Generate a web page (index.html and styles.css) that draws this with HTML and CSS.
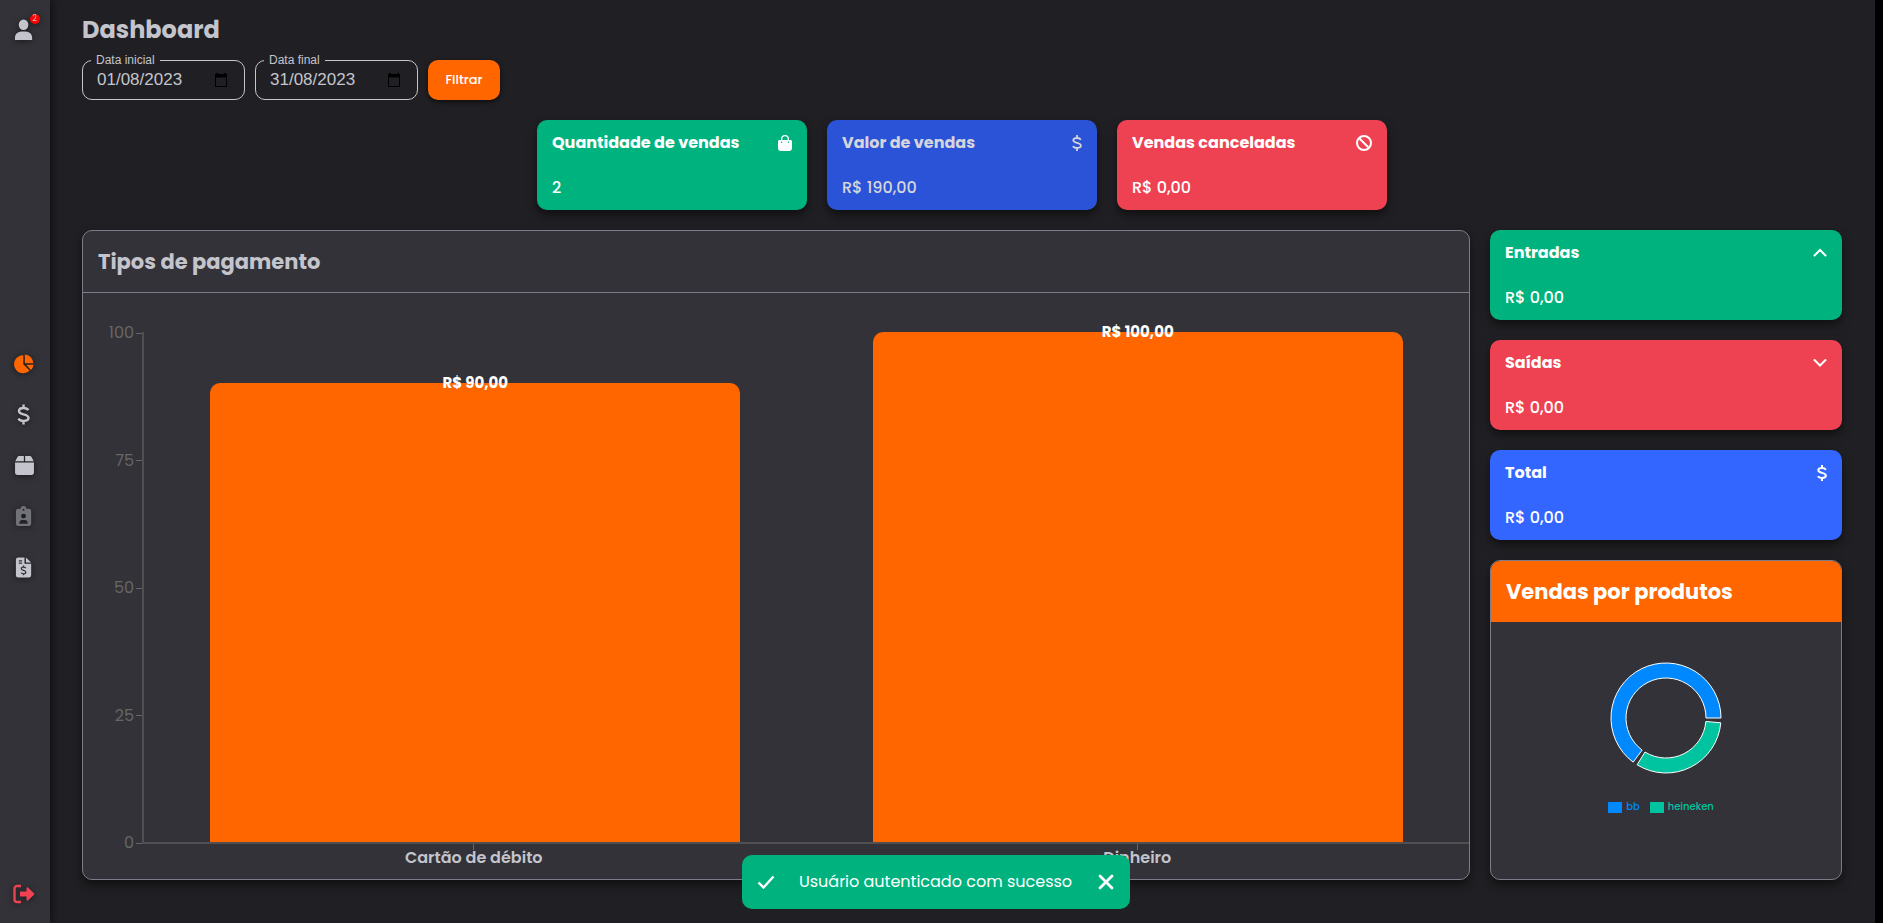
FILE: index.html
```html
<!DOCTYPE html>
<html lang="pt-BR">
<head>
<meta charset="utf-8">
<meta name="viewport" content="width=device-width, initial-scale=1">
<title>Dashboard</title>
<link rel="stylesheet" href="styles.css">
</head>
<body>
<div class="app">
  <nav class="sidebar" aria-label="Menu principal">
    <a href="#perfil" class="nav-link profile" aria-label="Perfil">
      <svg class="nav-icon" viewBox="0 0 20 22"><ellipse cx="10" cy="6" rx="5" ry="5.5"/><path d="M1 22v-2.500C1 15 4.500 13 10 13s9 2 9 6.500V22z"/></svg>
      <span class="badge">2</span>
    </a>
    <div class="nav-group">
      <a href="#dashboard" class="nav-link active" aria-label="Dashboard">
        <svg class="nav-icon" viewBox="0 0 20 20"><path d="M9.300 1.200v9l6.200 6.300A9 9 0 1 1 9.300 1.200z"/><path d="M10.800.6a8.800 8.800 0 0 1 8.500 8.600h-8.500z"/><path d="M12.200 10.700h7.400a9 9 0 0 1-2.700 5.200z"/></svg>
      </a>
      <a href="#vendas" class="nav-link" aria-label="Vendas">
        <svg class="nav-icon line" viewBox="0 0 20 22"><path d="M10 .5v3.500M10 18v3.500M15 6.500C14 4.800 12.200 4.200 10 4.200c-3 0-4.800 1.400-4.800 3.200 0 2 1.600 2.700 4.800 3.500s5.200 1.500 5.200 3.600-2 3.300-5.200 3.300c-2.500 0-4.400-.8-5.400-2.500" stroke-width="2.500"/></svg>
      </a>
      <a href="#produtos" class="nav-link" aria-label="Produtos">
        <svg class="nav-icon" viewBox="0 0 20 20"><path d="M9.400 1v5H1.200l2-3.800C3.600 1.400 4.300 1 5.200 1zM10.600 1h4.200c.9 0 1.600.4 2 1.200l2 3.800h-8.200zM1 7.200h18v9.300a2.500 2.500 0 0 1-2.500 2.500h-13A2.500 2.500 0 0 1 1 16.500z"/></svg>
      </a>
      <a href="#clientes" class="nav-link muted" aria-label="Clientes">
        <svg class="nav-icon" viewBox="0 0 20 22"><path fill-rule="evenodd" d="M4.500 3H7a3 3 0 0 1 6 0h2.500A2.500 2.500 0 0 1 18 5.500v13a2.500 2.500 0 0 1-2.500 2.500h-11A2.500 2.500 0 0 1 2 18.500v-13A2.500 2.500 0 0 1 4.500 3zM10 3a1 1 0 1 0 0 2 1 1 0 0 0 0-2zm0 5a2.600 2.600 0 1 0 0 5.200A2.600 2.600 0 0 0 10 8zm-4.500 10.500h9c0-2.500-1.500-3.700-3-3.700h-3c-1.500 0-3 1.200-3 3.700z"/></svg>
      </a>
      <a href="#faturas" class="nav-link" aria-label="Faturas">
        <svg class="nav-icon" viewBox="0 0 20 22"><path d="M4.500.5H11V7h7v12a2.500 2.500 0 0 1-2.500 2.500h-11A2.500 2.500 0 0 1 2 19V3A2.500 2.500 0 0 1 4.500.5z"/><path d="M12.500.5L18 5.700h-5.500z"/><path class="cutout" d="M5 4h3.500M5 6.500h3.500M10 9v1.500M10 17.500V19M12.300 11.700c-.6-.8-1.300-1-2.300-1-1.400 0-2.300.7-2.300 1.700 0 1.100 1 1.400 2.300 1.700s2.400.7 2.400 1.800-1 1.700-2.400 1.700c-1 0-2-.3-2.500-1.100"/></svg>
      </a>
    </div>
    <a href="#sair" class="nav-link exit" aria-label="Sair">
      <svg class="nav-icon" viewBox="0 0 22 20"><path d="M8 2H4a2.500 2.500 0 0 0-2.500 2.500v11A2.500 2.500 0 0 0 4 18h4" fill="none" stroke="currentColor" stroke-width="2.400"/><path d="M8 7.500h5.500V4.200c0-.8.900-1.200 1.500-.6l6 5.600c.5.500.5 1.100 0 1.600l-6 5.600c-.6.600-1.500.2-1.500-.6v-3.300H8c-.6 0-1-.4-1-1v-3c0-.6.400-1 1-1z"/></svg>
    </a>
  </nav>

  <main class="content">
    <header class="page-header">
      <h1 class="page-title">Dashboard</h1>
      <form class="filters">
        <fieldset class="field">
          <legend class="field-legend"><label for="start">Data inicial</label></legend>
          <div class="field-row">
            <input class="field-input" id="start" type="text" value="01/08/2023">
            <svg class="calendar" viewBox="0 0 14 14"><path fill-rule="evenodd" d="M2 1V0h2v1h6V0h2v1h1v13H1V1zM2 4.500V13h10V4.500z"/></svg>
          </div>
        </fieldset>
        <fieldset class="field">
          <legend class="field-legend"><label for="end">Data final</label></legend>
          <div class="field-row">
            <input class="field-input" id="end" type="text" value="31/08/2023">
            <svg class="calendar" viewBox="0 0 14 14"><path fill-rule="evenodd" d="M2 1V0h2v1h6V0h2v1h1v13H1V1zM2 4.500V13h10V4.500z"/></svg>
          </div>
        </fieldset>
        <button class="filter-button" type="button">Filtrar</button>
      </form>
    </header>

    <section class="summary">
      <article class="card green">
        <div class="card-head"><h2 class="card-title">Quantidade de vendas</h2>
          <svg class="card-icon" viewBox="-1 0 16 16"><path fill-rule="evenodd" d="M4 5V4a4 4 0 0 1 8 0v1h1.500c1 0 1.500.5 1.500 1.500V13a3 3 0 0 1-3 3H4a3 3 0 0 1-3-3V6.500C1 5.500 1.500 5 2.500 5zm1.300 0h5.400V4a2.700 2.700 0 0 0-5.400 0zM4.600 6.500a.7.7 0 1 0 0 1.400.7.7 0 0 0 0-1.400zm6.800 0a.7.7 0 1 0 0 1.400.7.7 0 0 0 0-1.400z"/></svg>
        </div>
        <p class="card-value">2</p>
      </article>
      <article class="card blue dim">
        <div class="card-head"><h2 class="card-title">Valor de vendas</h2>
          <svg class="card-icon slim line" viewBox="0 0 10 16"><path d="M5 0v3M5 13v3M8.800 4.900C8.200 3.600 6.800 3 5 3 2.800 3 1.300 3.900 1.300 5.300c0 1.500 1.300 2 3.700 2.600s3.900 1.100 3.900 2.700S7.300 13 5 13c-2 0-3.400-.6-4-1.900" stroke-width="1.800"/></svg>
        </div>
        <p class="card-value">R$ 190,00</p>
      </article>
      <article class="card red">
        <div class="card-head"><h2 class="card-title">Vendas canceladas</h2>
          <svg class="card-icon line" viewBox="0 0 16 16"><circle cx="8" cy="8" r="7" stroke-width="2"/><path d="M3 3l10 10" stroke-width="2"/></svg>
        </div>
        <p class="card-value">R$ 0,00</p>
      </article>
    </section>

    <div class="boards">
      <section class="panel payments">
        <h2 class="panel-title">Tipos de pagamento</h2>
        <div class="chart">
          <div class="y-axis">
            <span class="y-tick">100</span><span class="y-tick">75</span><span class="y-tick">50</span><span class="y-tick">25</span><span class="y-tick">0</span>
          </div>
          <div class="plot">
            <div class="bar" style="height:90%"><span class="bar-label">R$ 90,00</span></div>
            <div class="bar" style="height:100%"><span class="bar-label">R$ 100,00</span></div>
          </div>
          <div class="x-axis">
            <span class="x-tick">Cartão de débito</span><span class="x-tick">Dinheiro</span>
          </div>
        </div>
      </section>

      <aside class="side">
        <article class="card green">
          <div class="card-head"><h2 class="card-title">Entradas</h2>
            <svg class="card-icon line" viewBox="-1 0 16 16"><path d="M2.500 10.500L8 5l5.500 5.500" stroke-width="2" stroke-linecap="round"/></svg>
          </div>
          <p class="card-value">R$ 0,00</p>
        </article>
        <article class="card red">
          <div class="card-head"><h2 class="card-title">Saídas</h2>
            <svg class="card-icon line" viewBox="-1 0 16 16"><path d="M2.500 5L8 10.500 13.500 5" stroke-width="2" stroke-linecap="round"/></svg>
          </div>
          <p class="card-value">R$ 0,00</p>
        </article>
        <article class="card blue">
          <div class="card-head"><h2 class="card-title">Total</h2>
            <svg class="card-icon slim line" viewBox="0 0 10 16"><path d="M5 0v3M5 13v3M8.800 4.900C8.200 3.600 6.800 3 5 3 2.800 3 1.300 3.900 1.300 5.300c0 1.500 1.300 2 3.700 2.600s3.900 1.100 3.900 2.700S7.300 13 5 13c-2 0-3.400-.6-4-1.900" stroke-width="2"/></svg>
          </div>
          <p class="card-value">R$ 0,00</p>
        </article>
        <section class="panel products">
          <h2 class="panel-title accent">Vendas por produtos</h2>
          <div class="donut-box">
            <svg class="donut" viewBox="0 0 120 120" role="img" aria-label="Vendas por produtos">
              <path fill="#0088fe" d="M115 60A55 55 0 1 0 27.150 104.120L36.110 92.080A40 40 0 1 1 100 60z"/>
              <path fill="#00c49f" d="M31.120 106.810A55 55 0 0 0 114.790 64.790L99.850 63.490A40 40 0 0 1 39 94.040z"/>
            </svg>
            <ul class="legend">
              <li class="legend-item first">bb</li>
              <li class="legend-item second">heineken</li>
            </ul>
          </div>
        </section>
      </aside>
    </div>
  </main>
  <div class="scroll-track"></div>

  <div class="toast" role="status">
    <svg class="toast-check" viewBox="0 0 18 14"><path d="M1.500 7.500l5 5L16.500 1.500" stroke-width="2.400"/></svg>
    <span class="toast-text">Usuário autenticado com sucesso</span>
    <button class="toast-close" type="button" aria-label="Fechar">
      <svg class="toast-x" viewBox="0 0 18 18"><path d="M3 3l12 12M15 3L3 15" stroke-width="2.800" stroke-linecap="round"/></svg>
    </button>
  </div>
</div>
</body>
</html>
```
FILE: styles.css
```css
* { box-sizing: border-box; }

body {
  margin: 0;
  background: #202024;
  color: #c4c4cc;
  font: 16px/24px Poppins, Inter, "Liberation Sans", sans-serif;
}

h1, h2, p, ul { margin: 0; padding: 0; }

svg { display: block; fill: currentColor; }

.line { fill: none; stroke: currentColor; }

.app {
  position: relative;
  display: flex;
  min-height: 100vh;
}

/* Sidebar */
.sidebar {
  display: flex;
  flex-direction: column;
  align-items: center;
  justify-content: space-between;
  width: 50px;
  padding: 16px 2px 16px 0;
  background: #323238;
  box-shadow: 2px 0 8px rgba(0, 0, 0, .5);
}

.nav-group {
  display: flex;
  flex-direction: column;
  gap: 24px;
  padding-top: 8px;
}

.nav-link {
  position: relative;
  display: grid;
  place-items: center;
  width: 27px;
  height: 27px;
  color: #c4c4cc;
  filter: drop-shadow(0 1px 3px rgba(0, 0, 0, .5));
}

.nav-icon { height: 21px; }
.active { color: #f60; }
.muted { color: #717178; }
.exit { color: #ee4252; }
.active .nav-icon, .exit .nav-icon { height: 20px; }
.cutout { fill: none; stroke: #323238; stroke-width: 1.3; }

.badge {
  position: absolute;
  top: -2px;
  right: -2px;
  width: 10px;
  height: 10px;
  border-radius: 50%;
  background: #f00;
  font-size: 8px;
  line-height: 10px;
  text-align: center;
}

/* Page */
.content {
  display: flex;
  flex: 1;
  flex-direction: column;
  gap: 20px;
  min-width: 0;
  padding: 15px 33px 43px 32px;
}

.scroll-track { width: 8px; background: #000; }

.page-title {
  font-size: 24px;
  line-height: 30px;
  font-weight: 700;
}

.filters { display: flex; align-items: flex-end; gap: 10px; margin-top: 8px; }

.field {
  width: 163px;
  min-width: 0;
  height: 47px;
  margin: 0;
  padding: 1px 14px 0 8px;
  border: 1px solid #c4c4cc;
  border-radius: 10px;
  font-family: "Liberation Sans", sans-serif;
}

.field-legend {
  padding: 0 5px;
  font-size: 12px;
  line-height: 14px;
}

.field-row { display: flex; align-items: center; }

.field-input {
  flex: 1;
  min-width: 0;
  height: 24px;
  padding: 0 6px;
  border: 0;
  outline: 0;
  background: none;
  color: inherit;
  font: 17px/24px "Liberation Sans", sans-serif;
}

.calendar { width: 18px; height: 14px; color: #000; }

.filter-button {
  width: 72px;
  height: 40px;
  padding: 0;
  border: 0;
  border-radius: 10px;
  background: #f60;
  color: #fff;
  box-shadow: 0 2px 5px rgba(0, 0, 0, .6);
  font: 500 13px/20px Poppins, Inter, sans-serif;
}

/* Cards */
.summary { display: flex; justify-content: center; gap: 20px; }
.summary .card { width: 270px; }

.card {
  display: flex;
  flex-direction: column;
  justify-content: space-between;
  height: 90px;
  padding: 11px 15px 10px;
  border-radius: 10px;
  color: #fff;
  box-shadow: 0 5px 10px rgba(0, 0, 0, .5);
}

.card-head { display: flex; align-items: center; justify-content: space-between; }
.card-title { font-size: 16px; line-height: 24px; font-weight: 700; }
.card-value { font-weight: 500; }
.card-icon { width: 16px; height: 16px; }
.card-icon.slim { width: 10px; }
.green { background: #00b37e; }
.red { background: #ee4252; }
.blue { background: #3366ff; }
.dim { background: #2a53d8; color: #d5d5db; }

/* Panels */
.boards {
  display: grid;
  grid-template-columns: 1fr 20%;
  flex: 1;
  gap: 20px;
}

.side { display: flex; flex-direction: column; gap: 20px; }

.panel {
  display: flex;
  flex-direction: column;
  overflow: hidden;
  border: 1px solid #7c7c8a;
  border-radius: 10px;
  background: #323238;
  box-shadow: 0 5px 10px rgba(0, 0, 0, .5);
}

.panel-title {
  padding: 15px;
  border-bottom: 1px solid #7c7c8a;
  font-size: 21px;
  line-height: 31px;
  font-weight: 700;
}

.accent { border-bottom: 0; background: #f60; color: #fff; }

/* Bar chart */
.chart {
  display: grid;
  grid-template-columns: 59px 1fr;
  grid-template-rows: 1fr 35px;
  flex: 1;
  padding-top: 39px;
}

.y-axis {
  display: flex;
  flex-direction: column;
  justify-content: space-between;
  color: #666;
}

.y-tick {
  display: flex;
  align-items: center;
  justify-content: flex-end;
  gap: 2px;
  height: 2px;
}

.y-tick::after { width: 6px; height: 1px; background: #666; content: ""; }

.plot {
  display: grid;
  grid-template-columns: 1fr 1fr;
  align-items: end;
  border-bottom: 2px solid #505052;
  border-left: 2px solid #505052;
}

.bar {
  width: 80%;
  justify-self: center;
  border-radius: 10px 10px 0 0;
  background: #f60;
  text-align: center;
}

.bar-label {
  display: block;
  margin-top: -12px;
  color: #fff;
  font-size: 15px;
  font-weight: 700;
}

.x-axis { display: grid; grid-column: 2; grid-template-columns: 1fr 1fr; }

.x-tick {
  display: flex;
  flex-direction: column;
  align-items: center;
  line-height: 16px;
  font-weight: 600;
}

.x-tick::before { width: 1px; height: 6px; background: #666; content: ""; }

/* Donut chart */
.products { flex: 1; }

.donut-box {
  display: flex;
  flex: 1;
  flex-direction: column;
  align-items: center;
  padding-top: 36px;
}

.donut { width: 120px; height: 120px; stroke: #fff; }

.legend {
  display: flex;
  gap: 10px;
  margin: 21px 10px 0 0;
  list-style: none;
  font-size: 10px;
  line-height: 16px;
  font-weight: 500;
}

.legend-item { display: flex; align-items: center; gap: 4px; }
.legend-item::before { width: 14px; height: 11px; background: currentColor; content: ""; }
.first { color: #0088fe; }
.second { color: #00c49f; }

/* Toast */
.toast {
  position: absolute;
  bottom: 14px;
  left: 0;
  right: 12px;
  display: flex;
  align-items: center;
  justify-content: space-between;
  width: 388px;
  height: 54px;
  margin: 0 auto;
  padding: 0 15px;
  border-radius: 10px;
  background: #00b37e;
  color: #fff;
}

.toast-check, .toast-x { width: 18px; fill: none; stroke: currentColor; }
.toast-close { padding: 0; border: 0; background: none; color: inherit; }
```
